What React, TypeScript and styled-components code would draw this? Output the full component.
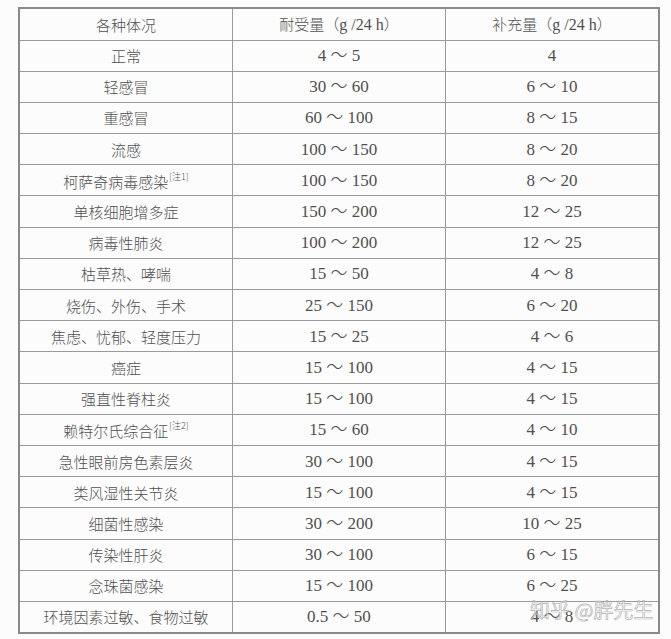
import React from "react";
import styled, { createGlobalStyle } from "styled-components";

const GlobalStyle = createGlobalStyle`
  html, body {
    margin: 0;
    padding: 0;
    background: #fcfcfc;
  }
`;

const Page = styled.div`
  position: relative;
  width: 671px;
  height: 639px;
  padding: 7px 0 0 18px;
  box-sizing: border-box;
  overflow: hidden;
`;

const Table = styled.table`
  width: 642px;
  border-collapse: collapse;
  table-layout: fixed;
  border: 2px solid #8a8a8a;
  color: #505050;
`;

const Row = styled.tr<{ $head?: boolean }>`
  height: ${(p) => (p.$head ? "32px" : "31.2px")};
`;

const Cell = styled.td<{ $num?: boolean }>`
  border: 1px solid #9a9a9a;
  padding: 0;
  text-align: center;
  vertical-align: middle;
  font-family: ${(p) =>
    p.$num
      ? '"Liberation Serif", "Noto Sans CJK SC", serif'
      : '"Noto Sans CJK SC", "Liberation Serif", serif'};
  font-size: ${(p) => (p.$num ? "17px" : "15px")};
  font-weight: 300;
  line-height: 1;
  white-space: nowrap;
`;

const Unit = styled.span`
  font-family: "Liberation Serif", serif;
  font-size: 16px;
`;

const Note = styled.sup`
  font-size: 9px;
  vertical-align: 8px;
  margin-left: 1px;
`;

const Watermark = styled.div`
  position: absolute;
  left: 530px;
  top: 600px;
  font-family: "Noto Sans CJK SC", sans-serif;
  font-size: 20px;
  line-height: 20px;
  white-space: nowrap;
  -webkit-text-stroke: 0.7px rgba(145, 145, 145, 0.7);
  -webkit-text-fill-color: rgba(255, 255, 255, 0.55);
`;

interface Item {
  name: string;
  note?: string;
  tol: string;
  sup: string;
}

const rows: Item[] = [
  { name: "正常", tol: "4 ～ 5", sup: "4" },
  { name: "轻感冒", tol: "30 ～ 60", sup: "6 ～ 10" },
  { name: "重感冒", tol: "60 ～ 100", sup: "8 ～ 15" },
  { name: "流感", tol: "100 ～ 150", sup: "8 ～ 20" },
  { name: "柯萨奇病毒感染", note: "[注1]", tol: "100 ～ 150", sup: "8 ～ 20" },
  { name: "单核细胞增多症", tol: "150 ～ 200", sup: "12 ～ 25" },
  { name: "病毒性肺炎", tol: "100 ～ 200", sup: "12 ～ 25" },
  { name: "枯草热、哮喘", tol: "15 ～ 50", sup: "4 ～ 8" },
  { name: "烧伤、外伤、手术", tol: "25 ～ 150", sup: "6 ～ 20" },
  { name: "焦虑、忧郁、轻度压力", tol: "15 ～ 25", sup: "4 ～ 6" },
  { name: "癌症", tol: "15 ～ 100", sup: "4 ～ 15" },
  { name: "强直性脊柱炎", tol: "15 ～ 100", sup: "4 ～ 15" },
  { name: "赖特尔氏综合征", note: "[注2]", tol: "15 ～ 60", sup: "4 ～ 10" },
  { name: "急性眼前房色素层炎", tol: "30 ～ 100", sup: "4 ～ 15" },
  { name: "类风湿性关节炎", tol: "15 ～ 100", sup: "4 ～ 15" },
  { name: "细菌性感染", tol: "30 ～ 200", sup: "10 ～ 25" },
  { name: "传染性肝炎", tol: "30 ～ 100", sup: "6 ～ 15" },
  { name: "念珠菌感染", tol: "15 ～ 100", sup: "6 ～ 25" },
  { name: "环境因素过敏、食物过敏", tol: "0.5 ～ 50", sup: "4 ～ 8" },
];

const App: React.FC = () => {
  return (
    <Page>
      <GlobalStyle />
      <Table>
        <tbody>
          <Row $head>
            <Cell>各种体况</Cell>
            <Cell>
              耐受量（<Unit>g /24 h</Unit>）
            </Cell>
            <Cell>
              补充量（<Unit>g /24 h</Unit>）
            </Cell>
          </Row>
          {rows.map((r) => (
            <Row key={r.name}>
              <Cell>
                {r.name}
                {r.note && <Note>{r.note}</Note>}
              </Cell>
              <Cell $num>{r.tol}</Cell>
              <Cell $num>{r.sup}</Cell>
            </Row>
          ))}
        </tbody>
      </Table>
      <Watermark>知乎 @胖先生</Watermark>
    </Page>
  );
};

export default App;
